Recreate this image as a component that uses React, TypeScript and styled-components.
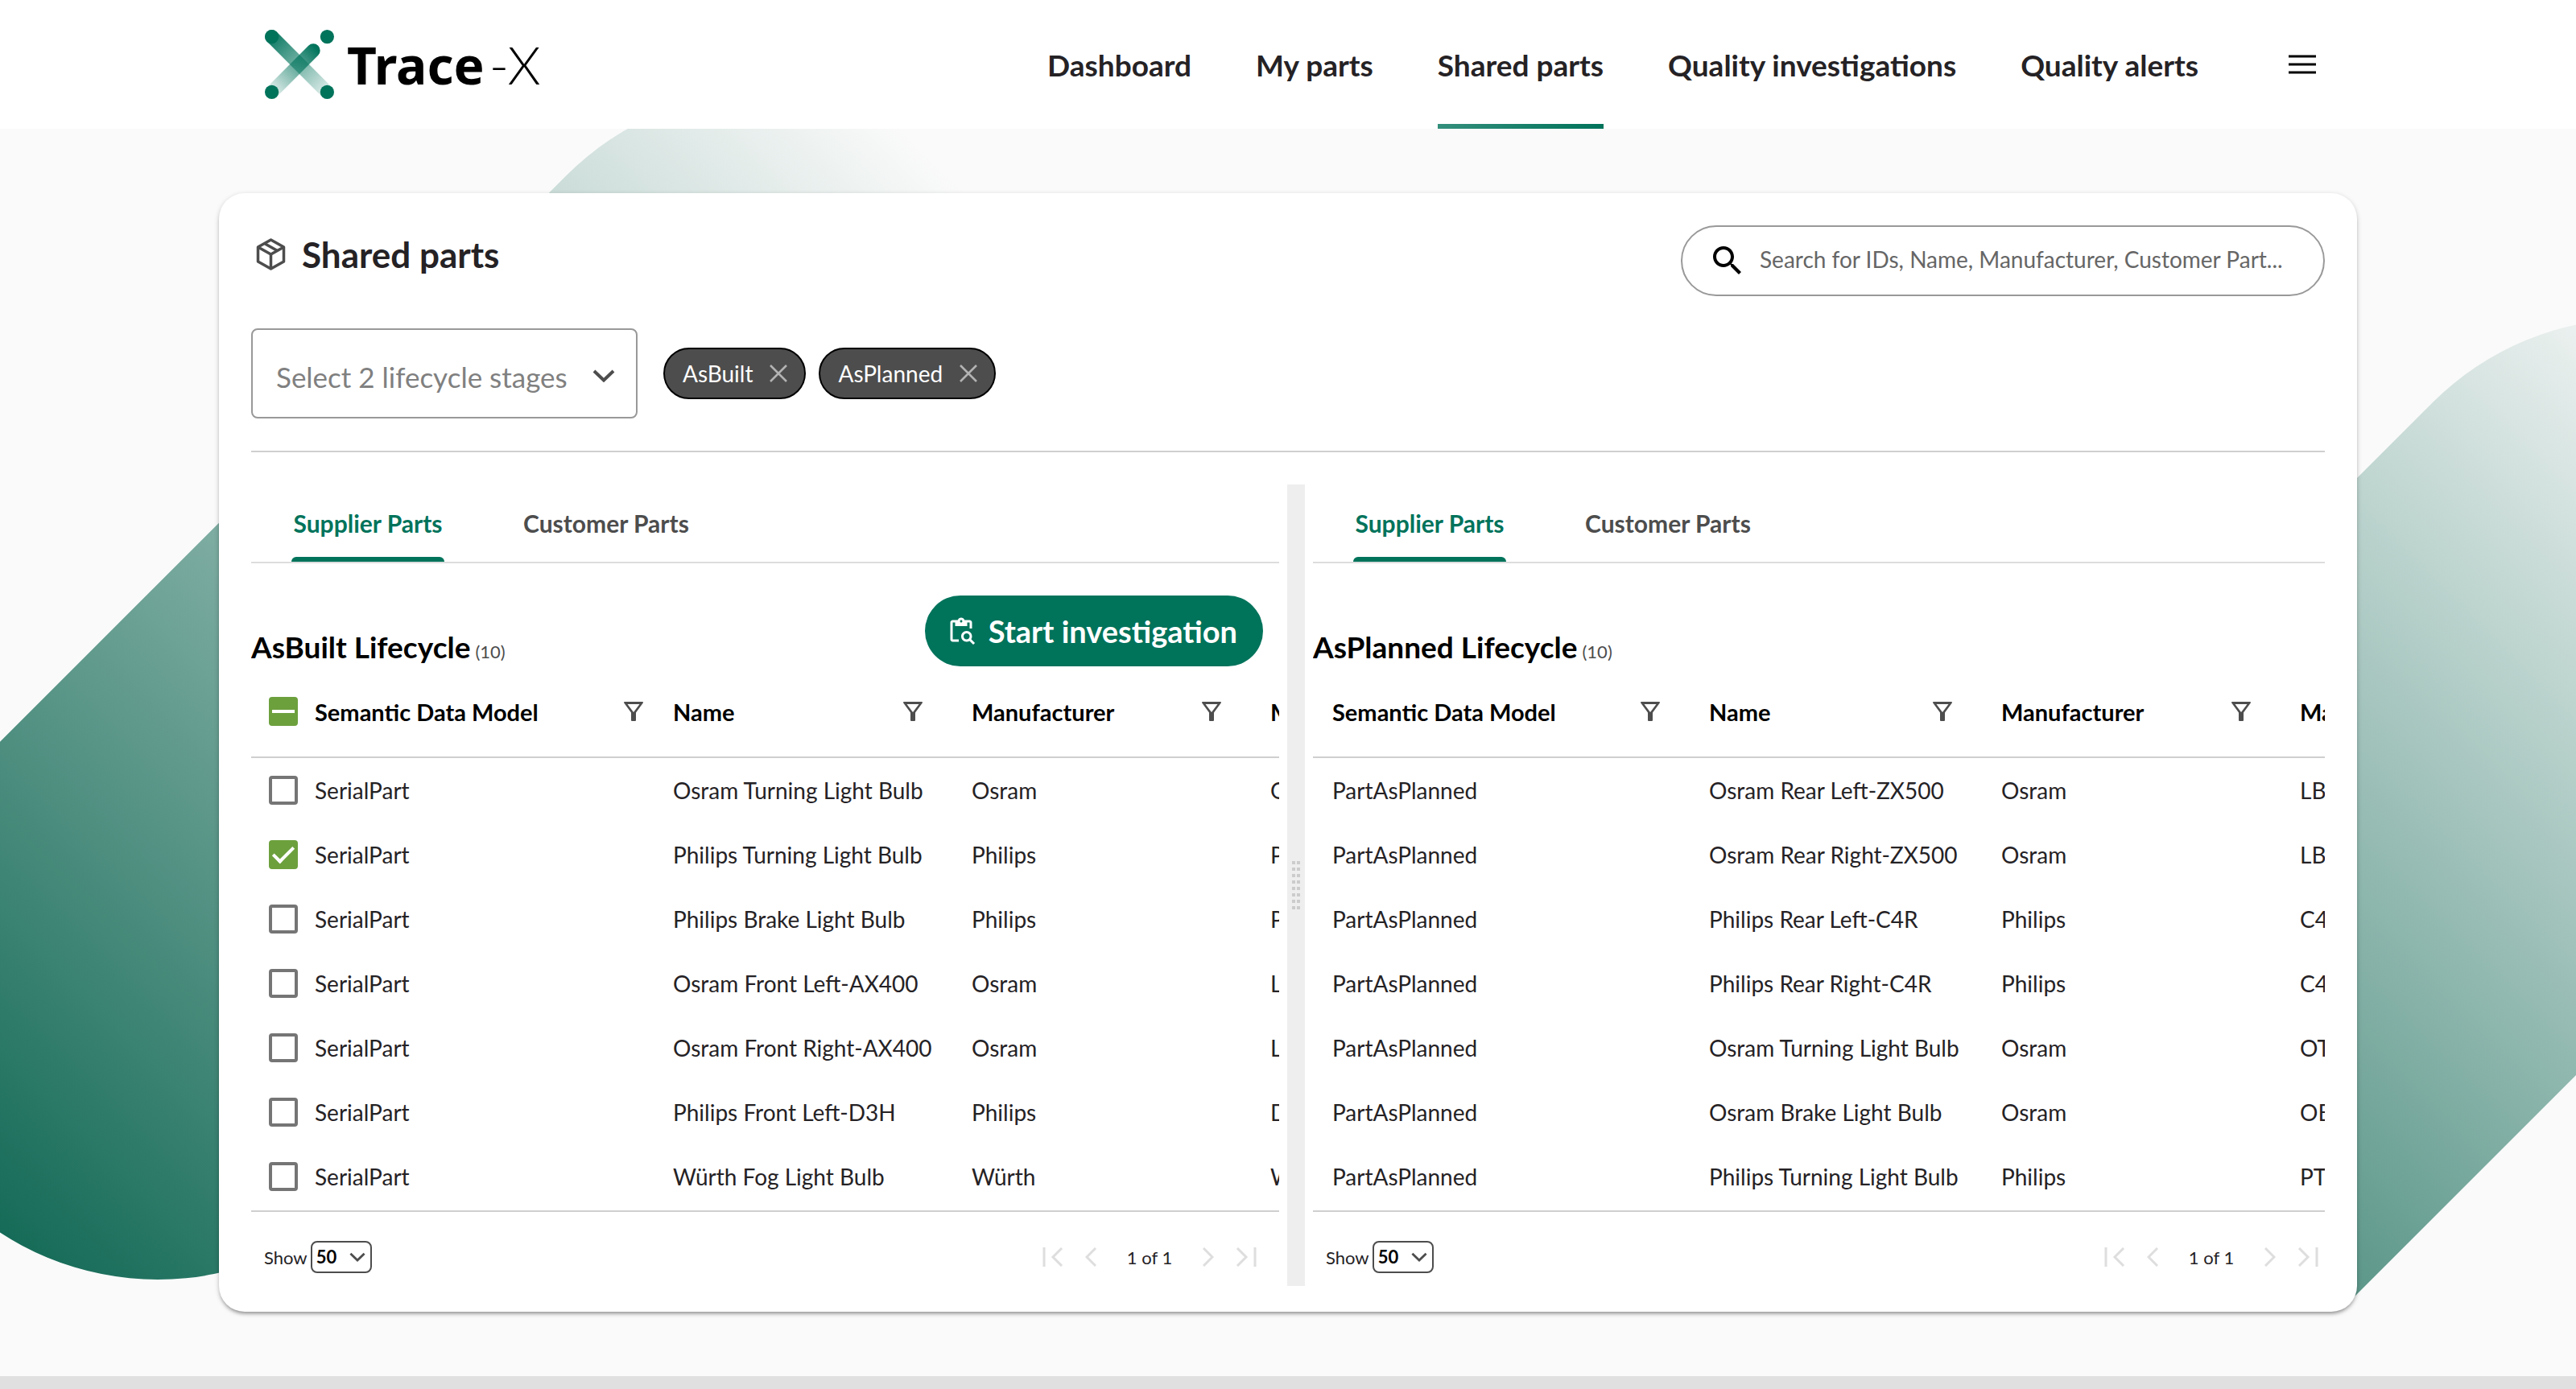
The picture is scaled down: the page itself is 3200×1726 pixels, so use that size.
import React, { useEffect, useRef } from "react";
import styled, { createGlobalStyle } from "styled-components";

const green = "#00735b";
const ink = "#252225";
const grey = "#4d4d4d";

const GlobalStyle = createGlobalStyle`
  *, *::before, *::after { box-sizing: border-box; }
  body { margin: 0; background: #fafafa; }
  body, button, input, select { font-family: Lato, "Open Sans", sans-serif; }
  button { cursor: pointer; }
`;

const Page = styled.div`
  position: relative;
  display: flex;
  flex-direction: column;
  min-height: 100vh;
  overflow: hidden;
  color: ${ink};
`;

const Backdrop = styled.svg`
  position: absolute;
  inset: 0;
  width: 100%;
  height: 100%;
`;

const Header = styled.header`
  position: relative;
  display: flex;
  align-items: center;
  height: 160px;
  padding: 0 calc(8.5% + 51px) 0 calc(8.5% + 57px);
  background: #fff;
`;

const Brand = styled.a`
  display: flex;
  align-items: center;
  gap: 16px;
  margin-right: auto;
  color: #000;
  text-decoration: none;
`;

const BrandText = styled.span`
  display: flex;
  align-items: baseline;
  gap: 6px;
  font: 700 64px/80px "Noto Sans", sans-serif;
`;

const BrandSuffix = styled.span`
  font: 300 66px/80px Lato, sans-serif;
`;

const Nav = styled.nav`
  display: flex;
  gap: 80px;
  height: 100%;
`;

const NavLink = styled.a<{ $active?: boolean }>`
  display: flex;
  align-items: center;
  color: ${ink};
  font-size: 37px;
  font-weight: 700;
  text-decoration: none;
  background: ${(p) => (p.$active ? `linear-gradient(90deg, #338f7c, ${green}) bottom / 100% 6px no-repeat` : "none")};
`;

const IconButton = styled.button`
  display: flex;
  padding: 0;
  border: 0;
  background: none;
  color: inherit;
`;

const MenuButton = styled(IconButton)`
  margin-left: 112px;
  color: #000;
`;

const Main = styled.main`
  position: relative;
  flex: 1;
  padding: 80px 8.5%;
`;

const Card = styled.section`
  padding: 40px 40px 32px;
  border-radius: 32px;
  background: #fff;
  box-shadow: 0 4px 4px -2px rgba(0, 0, 0, 0.3), 0 2px 6px rgba(0, 0, 0, 0.2);
`;

const CardHeader = styled.div`
  display: flex;
  justify-content: space-between;
  align-items: flex-start;
`;

const Title = styled.h1`
  display: flex;
  align-items: center;
  gap: 20px;
  height: 72px;
  margin: 0;
  padding-left: 6px;
  font-size: 44px;
  svg { color: ${grey}; }
`;

const SearchBox = styled.label`
  display: flex;
  align-items: center;
  gap: 16px;
  width: 800px;
  height: 88px;
  padding: 0 32px;
  border: 2px solid #999;
  border-radius: 44px;
  color: #000;
`;

const SearchInput = styled.input`
  flex: 1;
  min-width: 0;
  padding: 0 0 4px;
  border: 0;
  outline: 0;
  background: none;
  color: ${ink};
  font-size: 28px;
  text-overflow: ellipsis;
  &::placeholder { color: #666; opacity: 1; }
`;

const Filters = styled.div`
  display: flex;
  align-items: center;
  gap: 16px;
  margin-top: 40px;
  padding-bottom: 40px;
  border-bottom: 2px solid #cfcfcf;
`;

const SelectWrap = styled.div`
  display: grid;
  align-items: center;
  & > * { grid-area: 1 / 1; }
  & > svg { justify-self: end; pointer-events: none; color: ${grey}; }
`;

const StageSelectWrap = styled(SelectWrap)`
  width: 480px;
  margin-right: 16px;
  & > svg { margin: 6px 28px 0 0; }
`;

const StageSelect = styled.select`
  width: 100%;
  height: 112px;
  padding: 8px 64px 0 29px;
  border: 2px solid #999;
  border-radius: 8px;
  appearance: none;
  background: #fff;
  color: #808080;
  font-size: 35px;
`;

const Chip = styled.span`
  display: flex;
  align-items: center;
  gap: 20px;
  height: 64px;
  padding: 0 20px 0 22px;
  border: 2px solid #000;
  border-radius: 32px;
  background: ${grey};
  color: #fff;
  font-size: 28px;
`;

const ChipRemove = styled(IconButton)`
  color: #b3b3b3;
`;

const Split = styled.div`
  display: grid;
  grid-template-columns: minmax(0, 1277fr) 22px minmax(0, 1257fr);
  column-gap: 10px;
  margin-top: 40px;
`;

const Gutter = styled.div`
  display: flex;
  align-items: center;
  justify-content: center;
  background: #eee;
  &::before {
    content: "";
    width: 10px;
    height: 60px;
    background: conic-gradient(from 270deg at 4px 4px, #ccc 90deg, transparent 0) 0 0 / 6px 8px;
  }
`;

const Pane = styled.section`
  overflow: hidden;
`;

const Tabs = styled.div`
  display: flex;
  height: 98px;
  border-bottom: 2px solid #ddd;
`;

const Tab = styled.button<{ $active?: boolean }>`
  position: relative;
  min-width: 290px;
  padding: 0 48px;
  border: 0;
  background: none;
  color: ${(p) => (p.$active ? green : grey)};
  font-size: 30px;
  font-weight: 700;
  &::after {
    content: "";
    position: absolute;
    bottom: 0;
    left: 50px;
    right: 50px;
    height: 6px;
    border-radius: 6px 6px 0 0;
    background: ${(p) => (p.$active ? green : "transparent")};
  }
`;

const PaneHeader = styled.div`
  display: flex;
  align-items: flex-end;
  justify-content: space-between;
  height: 128px;
  padding-right: 20px;
`;

const PaneTitle = styled.h2`
  margin: 0;
  color: #000;
  font-size: 37px;
  line-height: 48px;
`;

const Count = styled.span`
  margin-left: 6px;
  color: #4d4d4d;
  font-size: 22px;
  font-weight: 400;
  line-height: 22px;
`;

const ActionButton = styled.button`
  display: flex;
  align-items: center;
  gap: 16px;
  height: 88px;
  padding: 0 32px 0 27px;
  border: 0;
  border-radius: 44px;
  background: ${green};
  color: #fff;
  font-size: 38px;
  font-weight: 700;
`;

const TableView = styled.div`
  overflow: hidden;
  padding-bottom: 2px;
  border-bottom: 2px solid #cfcfcf;
`;

const Table = styled.table`
  table-layout: fixed;
  width: 100%;
  border-spacing: 0;
  text-align: left;
  white-space: nowrap;
`;

const Col = styled.col<{ $w?: number }>`
  width: ${(p) => (p.$w ? `${p.$w}px` : "auto")};
`;

const Th = styled.th<{ $lead?: boolean }>`
  height: 114px;
  padding: 0 0 0 ${(p) => (p.$lead ? 24 : 0)}px;
  overflow: hidden;
  border-bottom: 2px solid #cfcfcf;
  color: #000;
  font-size: 29px;
`;

const HeadCell = styled.div<{ $end: number }>`
  display: flex;
  align-items: center;
  justify-content: space-between;
  padding-right: ${(p) => p.$end}px;
`;

const FilterButton = styled(IconButton)`
  color: ${grey};
`;

const Td = styled.td<{ $lead?: boolean }>`
  height: 80px;
  padding: 0 0 0 ${(p) => (p.$lead ? 24 : 0)}px;
  overflow: hidden;
  font-size: 28px;
`;

const Check = styled.input`
  display: grid;
  place-items: center;
  width: 36px;
  height: 36px;
  margin: 0 0 0 22px;
  border: 4px solid #757575;
  border-radius: 4px;
  appearance: none;
  &:checked, &:indeterminate { border-color: #6ca03d; background: #6ca03d; }
  &:checked::before {
    content: "";
    width: 26px;
    height: 14px;
    margin-bottom: 7px;
    border: solid #fff;
    border-width: 0 0 4px 4px;
    transform: rotate(-45deg);
  }
  &:indeterminate::before {
    content: "";
    width: 28px;
    height: 4px;
    background: #fff;
  }
`;

const PaneFooter = styled.footer<{ $end: number }>`
  display: flex;
  align-items: center;
  justify-content: space-between;
  padding: 36px ${(p) => p.$end}px 16px 16px;
`;

const PageSize = styled.label`
  display: flex;
  align-items: center;
  gap: 4px;
  font-size: 22px;
`;

const SizeWrap = styled(SelectWrap)`
  width: 76px;
  & > svg { margin-right: 8px; }
`;

const SizeSelect = styled.select`
  width: 100%;
  height: 40px;
  padding: 0 0 2px 5px;
  border: 2px solid ${grey};
  border-radius: 8px;
  appearance: none;
  background: #fff;
  color: #000;
  font-size: 22px;
  font-weight: 700;
`;

const Pager = styled.div`
  display: flex;
  align-items: center;
  gap: 27px;
  ${IconButton} { color: #dedede; }
`;

const PagerText = styled.span`
  min-width: 78px;
  text-align: center;
  font-size: 22px;
`;

const BottomBar = styled.footer`
  position: relative;
  height: 16px;
  background: #e0e0e0;
`;

const ChevronDown = ({ width = 28, height = 16 }: { width?: number; height?: number }) => (
  <svg width={width} height={height} viewBox="0 0 28 16" fill="none" stroke="currentColor" strokeWidth="4">
    <path d="M2 2l12 11.500L26 2" />
  </svg>
);

const FunnelIcon = () => (
  <svg width="24" height="24" viewBox="0 0 24 24" fill="currentColor" fillRule="evenodd">
    <path d="M1 0H23a1 1 0 0 1 .8 1.600L15 13.500V23a1 1 0 0 1-1 1H10a1 1 0 0 1-1-1V13.500L.2 1.600A1 1 0 0 1 1 0ZM4.500 3H19.500L12 13Z" />
  </svg>
);

const PagerIcon = ({ d, w }: { d: string; w: number }) => (
  <svg width={w} height="24" viewBox={`0 0 ${w} 24`} fill="none" stroke="currentColor" strokeWidth="3">
    <path d={d} />
  </svg>
);

const Logo = () => (
  <svg width="86" height="86" viewBox="0 0 86 86">
    <defs>
      <linearGradient id="barDown" gradientUnits="userSpaceOnUse" x1="8" y1="8" x2="78" y2="78">
        <stop offset="0" stopColor={green} stopOpacity="0.950" />
        <stop offset="1" stopColor={green} stopOpacity="0.120" />
      </linearGradient>
      <linearGradient id="barUp" gradientUnits="userSpaceOnUse" x1="8" y1="78" x2="64" y2="22">
        <stop offset="0" stopColor={green} stopOpacity="0.100" />
        <stop offset="1" stopColor={green} />
      </linearGradient>
    </defs>
    <g strokeWidth="17" strokeLinecap="round">
      <path d="M8.600 8.600L77.400 77.400" stroke="url(#barDown)" />
      <path d="M8.600 77.400L60.200 25.800" stroke="url(#barUp)" />
    </g>
    <g fill={green}>
      <circle cx="8.600" cy="8.600" r="8.600" />
      <circle cx="77.400" cy="8.600" r="8.600" />
      <circle cx="8.600" cy="77.400" r="8.600" />
      <circle cx="77.400" cy="77.400" r="8.600" />
    </g>
  </svg>
);

type PaneData = {
  name: string;
  id: string;
  selectable?: boolean;
  cols: number[];
  filterEnd: number[];
  heads: string[];
  rows: string[][];
};

const panes: PaneData[] = [
  {
    name: "AsBuilt",
    id: "built",
    selectable: true,
    cols: [79, 445, 371, 371],
    filterEnd: [37, 61, 61],
    heads: ["Semantic Data Model", "Name", "Manufacturer", "M"],
    rows: [
      ["SerialPart", "Osram Turning Light Bulb", "Osram", "O"],
      ["SerialPart", "Philips Turning Light Bulb", "Philips", "P"],
      ["SerialPart", "Philips Brake Light Bulb", "Philips", "P"],
      ["SerialPart", "Osram Front Left-AX400", "Osram", "L"],
      ["SerialPart", "Osram Front Right-AX400", "Osram", "L"],
      ["SerialPart", "Philips Front Left-D3H", "Philips", "D"],
      ["SerialPart", "Würth Fog Light Bulb", "Würth", "W"],
    ],
  },
  {
    name: "AsPlanned",
    id: "planned",
    cols: [492, 363, 371],
    filterEnd: [61, 61, 61],
    heads: ["Semantic Data Model", "Name", "Manufacturer", "Ma"],
    rows: [
      ["PartAsPlanned", "Osram Rear Left-ZX500", "Osram", "LBT"],
      ["PartAsPlanned", "Osram Rear Right-ZX500", "Osram", "LBT"],
      ["PartAsPlanned", "Philips Rear Left-C4R", "Philips", "C4"],
      ["PartAsPlanned", "Philips Rear Right-C4R", "Philips", "C4"],
      ["PartAsPlanned", "Osram Turning Light Bulb", "Osram", "OT"],
      ["PartAsPlanned", "Osram Brake Light Bulb", "Osram", "OB"],
      ["PartAsPlanned", "Philips Turning Light Bulb", "Philips", "PT"],
    ],
  },
];

function PartsPane({ data }: { data: PaneData }) {
  const all = useRef<HTMLInputElement>(null);
  useEffect(() => {
    if (all.current) all.current.indeterminate = true;
  }, []);

  return (
    <Pane>
      <Tabs role="tablist">
        <Tab role="tab" aria-selected $active>Supplier Parts</Tab>
        <Tab role="tab" aria-selected={false}>Customer Parts</Tab>
      </Tabs>
      <PaneHeader>
        <PaneTitle>
          {data.name} Lifecycle<Count>(10)</Count>
        </PaneTitle>
        {data.selectable && (
          <ActionButton>
            <svg width="36" height="36" viewBox="0 0 24 24" fill="currentColor" fillRule="evenodd">
              <path d="M5 5H7V8H17V5H19V10H21V5C21 3.900 20.100 3 19 3H14.820C14.400 1.840 13.300 1 12 1S9.600 1.840 9.180 3H5C3.900 3 3 3.900 3 5V19C3 20.100 3.900 21 5 21H10V19H5ZM12 3c.55 0 1 .45 1 1s-.45 1-1 1-1-.45-1-1 .45-1 1-1Z" />
              <path d="M20.300 18.900c.4-.7.7-1.500.7-2.400 0-2.500-2-4.500-4.500-4.500S12 14 12 16.500s2 4.500 4.500 4.500c.9 0 1.700-.3 2.400-.7L22 23.400 23.400 22l-3.100-3.100Zm-3.800.1c-1.400 0-2.500-1.100-2.500-2.500s1.100-2.500 2.500-2.500 2.500 1.100 2.500 2.500-1.100 2.500-2.500 2.500Z" />
            </svg>
            Start investigation
          </ActionButton>
        )}
      </PaneHeader>
      <TableView>
        <Table>
          <colgroup>
            {data.cols.map((w, i) => <Col key={i} $w={w} />)}
            <Col />
          </colgroup>
          <thead>
            <tr>
              {data.selectable && (
                <Th>
                  <Check ref={all} type="checkbox" aria-label="Select all parts" />
                </Th>
              )}
              {data.heads.map((h, i) => (
                <Th key={i} scope="col" $lead={!data.selectable && i === 0}>
                  {i < data.filterEnd.length ? (
                    <HeadCell $end={data.filterEnd[i]}>
                      {h}
                      <FilterButton aria-label={`Filter ${h}`}><FunnelIcon /></FilterButton>
                    </HeadCell>
                  ) : h}
                </Th>
              ))}
            </tr>
          </thead>
          <tbody>
            {data.rows.map((row, r) => (
              <tr key={r}>
                {data.selectable && (
                  <Td>
                    <Check type="checkbox" defaultChecked={r === 1} aria-label={`Select ${row[1]}`} />
                  </Td>
                )}
                {row.map((cell, i) => (
                  <Td key={i} $lead={!data.selectable && i === 0}>{cell}</Td>
                ))}
              </tr>
            ))}
          </tbody>
        </Table>
      </TableView>
      <PaneFooter $end={data.selectable ? 28 : 8}>
        <PageSize htmlFor={`size-${data.id}`}>
          Show
          <SizeWrap>
            <SizeSelect id={`size-${data.id}`}>
              <option>50</option>
            </SizeSelect>
            <ChevronDown width={20} height={12} />
          </SizeWrap>
        </PageSize>
        <Pager>
          <IconButton disabled aria-label="First page"><PagerIcon w={26} d="M2 0V24M24 1L13 12L24 23" /></IconButton>
          <IconButton disabled aria-label="Previous page"><PagerIcon w={14} d="M13 1L2 12L13 23" /></IconButton>
          <PagerText>1 of 1</PagerText>
          <IconButton disabled aria-label="Next page"><PagerIcon w={14} d="M1 1L12 12L1 23" /></IconButton>
          <IconButton disabled aria-label="Last page"><PagerIcon w={26} d="M24 0V24M2 1L13 12L2 23" /></IconButton>
        </Pager>
      </PaneFooter>
    </Pane>
  );
}

const links = ["Dashboard", "My parts", "Shared parts", "Quality investigations", "Quality alerts"];

export default function App() {
  return (
    <Page>
      <GlobalStyle />
      <Backdrop viewBox="0 0 3200 1726" preserveAspectRatio="xMidYMin slice" aria-hidden="true">
        <defs>
          <linearGradient id="leftFade" gradientUnits="userSpaceOnUse" x1="-141" y1="1569" x2="1195" y2="233">
            <stop offset="0" stopColor="#05614c" />
            <stop offset="1" stopColor="#05614c" stopOpacity="0" />
          </linearGradient>
          <linearGradient id="rightFade" gradientUnits="userSpaceOnUse" x1="2220" y1="1809" x2="3493" y2="536">
            <stop offset="0" stopColor="#05614c" />
            <stop offset="1" stopColor="#05614c" stopOpacity="0" />
          </linearGradient>
        </defs>
        <path d="M196 1232L957 471" stroke="url(#leftFade)" strokeWidth="716" strokeLinecap="round" />
        <path d="M2700 822L3022 500A358 358 0 0 1 3528 1008L2912 1624L2700 1500Z" fill="url(#rightFade)" />
      </Backdrop>

      <Header>
        <Brand href="#" aria-label="Trace-X">
          <Logo />
          <BrandText>
            Trace<BrandSuffix>-X</BrandSuffix>
          </BrandText>
        </Brand>
        <Nav>
          {links.map((l) => (
            <NavLink key={l} href="#" $active={l === "Shared parts"}>{l}</NavLink>
          ))}
        </Nav>
        <MenuButton aria-label="Menu">
          <svg width="34" height="24" viewBox="0 0 34 24" stroke="currentColor" strokeWidth="3">
            <path d="M0 2H34M0 12H34M0 22H34" />
          </svg>
        </MenuButton>
      </Header>

      <Main>
        <Card>
          <CardHeader>
            <Title>
              <svg width="37" height="40" viewBox="0 0 36 40" fill="none" stroke="currentColor" strokeWidth="3.500" strokeLinejoin="round">
                <path d="M18 2L34 11V29L18 38L2 29V11ZM2 11L18 20L34 11M18 20V38M10 6.500L26 15.500" />
              </svg>
              Shared parts
            </Title>
            <SearchBox>
              <svg width="48" height="48" viewBox="0 0 24 24" fill="currentColor">
                <path d="M15.500 14h-.79l-.28-.27C15.410 12.590 16 11.110 16 9.500 16 5.910 13.090 3 9.500 3S3 5.910 3 9.500 5.910 16 9.500 16c1.610 0 3.090-.59 4.230-1.570l.27.28v.79l5 4.990L20.490 19l-4.990-5zm-6 0C7.010 14 5 11.990 5 9.500S7.010 5 9.500 5 14 7.010 14 9.500 11.990 14 9.500 14z" />
              </svg>
              <SearchInput aria-label="Search parts" placeholder="Search for IDs, Name, Manufacturer, Customer Part..." />
            </SearchBox>
          </CardHeader>

          <Filters>
            <StageSelectWrap>
              <StageSelect aria-label="Lifecycle stages">
                <option>Select 2 lifecycle stages</option>
              </StageSelect>
              <ChevronDown />
            </StageSelectWrap>
            {panes.map((p) => (
              <Chip key={p.id}>
                {p.name}
                <ChipRemove aria-label={`Remove ${p.name}`}>
                  <svg width="24" height="24" viewBox="0 0 24 24" stroke="currentColor" strokeWidth="2.500">
                    <path d="M2 2L22 22M22 2L2 22" />
                  </svg>
                </ChipRemove>
              </Chip>
            ))}
          </Filters>

          <Split>
            <PartsPane data={panes[0]} />
            <Gutter role="separator" aria-orientation="vertical" />
            <PartsPane data={panes[1]} />
          </Split>
        </Card>
      </Main>
      <BottomBar />
    </Page>
  );
}
